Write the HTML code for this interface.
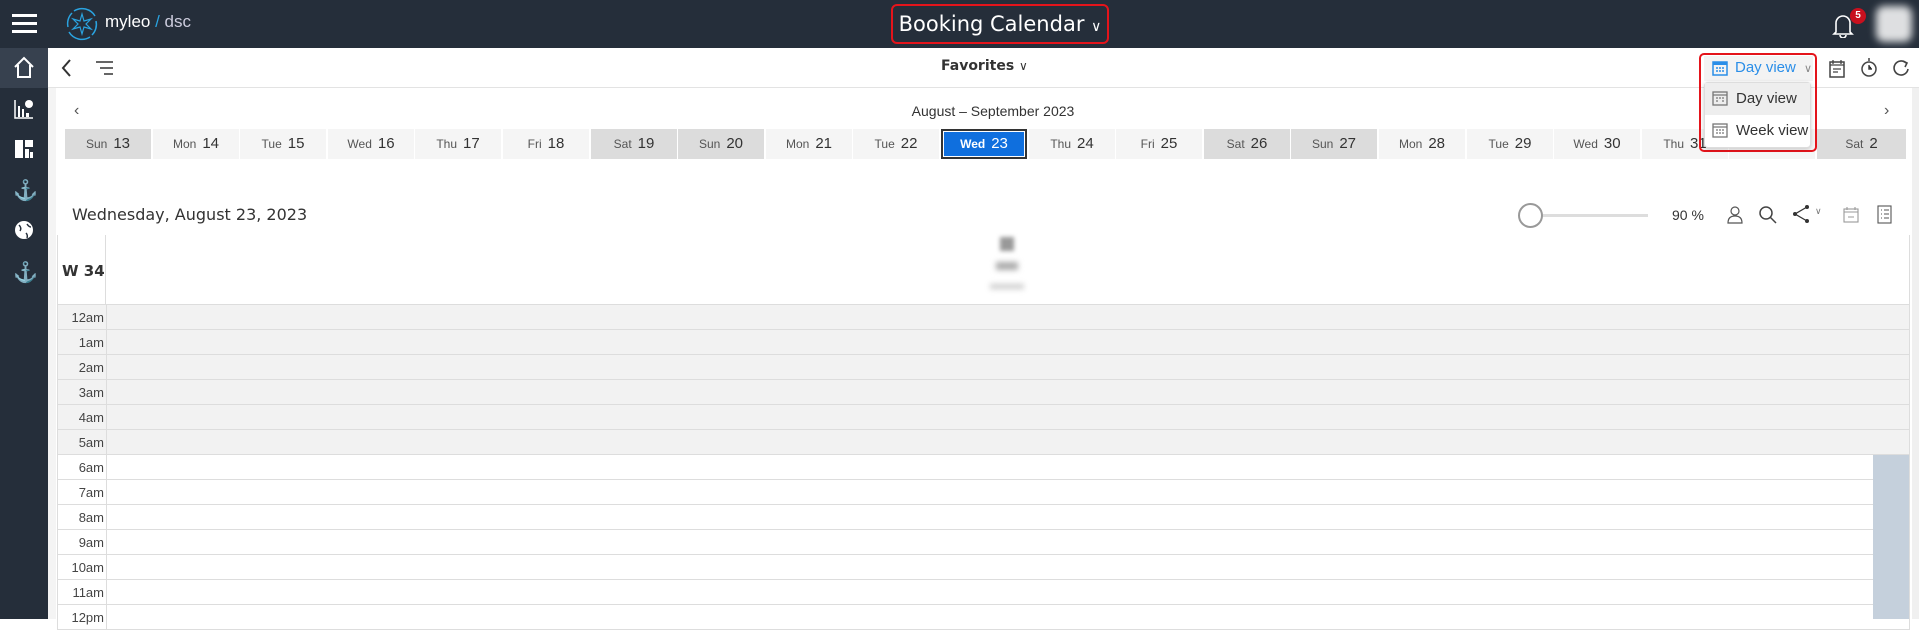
<!DOCTYPE html>
<html><head><meta charset="utf-8">
<style>
*{box-sizing:border-box;margin:0;padding:0}
body{width:1919px;height:619px;overflow:hidden;background:#fff;font-family:"Liberation Sans",sans-serif;position:relative;color:#333}
.abs{position:absolute}
#top{left:0;top:0;width:1919px;height:48px;background:#252e3a}
#side{left:0;top:48px;width:48px;height:571px;background:#252e3a}
.cell{position:absolute;top:129px;height:30px;width:86px;background:#f5f5f5;font-size:12px;color:#555;line-height:30px;text-align:center}
.cell b{font-weight:normal;font-size:15px;color:#333;margin-left:6px}
.we{background:#dcdcdc}
.row{position:absolute;left:57px;width:1853px;height:25px;border-bottom:1px solid #ddd;border-left:1px solid #ddd;border-right:1px solid #ddd}
.row span{position:absolute;left:0;width:46px;text-align:right;font-size:13px;color:#444;line-height:25px}
.row i{position:absolute;left:48px;top:0;bottom:-1px;border-left:1px solid #ddd}
.dd{z-index:5}
</style></head><body>
<div id="top" class="abs"></div>
<div class="abs" style="left:12px;top:14px;width:25px;height:3px;background:#fff"></div>
<div class="abs" style="left:12px;top:22px;width:25px;height:3px;background:#fff"></div>
<div class="abs" style="left:12px;top:30px;width:25px;height:3px;background:#fff"></div>
<svg class="abs" style="left:64px;top:6px" width="36" height="36" viewBox="0 0 36 36"><path d="M10 5 A15 15 0 0 1 31 10" fill="none" stroke="#2aa3e0" stroke-width="1.5"/><path d="M26 31 A15 15 0 0 1 5 26" fill="none" stroke="#2aa3e0" stroke-width="1.5"/><path d="M4 21 A15 15 0 0 1 8 7" fill="none" stroke="#2aa3e0" stroke-width="1.5"/><path d="M32 15 A15 15 0 0 1 28 29" fill="none" stroke="#2aa3e0" stroke-width="1.5"/><path d="M18 8 L20 15 L27 13 L22 18 L27 23 L20 21 L18 28 L16 21 L9 23 L14 18 L9 13 L16 15Z" fill="none" stroke="#2aa3e0" stroke-width="1.2"/></svg>
<div class="abs" style="left:105px;top:12px;font-size:17px;color:#fff">myleo<span style="color:#2aa3e0"> / </span><span style="color:#ccd">dsc</span></div>
<div class="abs" style="left:891px;top:4px;width:218px;height:40px;border:2px solid #e4141b;border-radius:6px;color:#fff;font-size:21px;line-height:36px;text-align:center;font-family:'DejaVu Sans','Liberation Sans',sans-serif">Booking Calendar <span style="font-size:14px">&#8744;</span></div>
<svg class="abs" style="left:1830px;top:12px" width="26" height="26" viewBox="0 0 26 26"><path d="M6 20 L6 11 A7 7 0 0 1 20 11 L20 20 L22 22 L4 22 Z M10 23 A3 3 0 0 0 16 23" fill="none" stroke="#fff" stroke-width="1.6"/></svg>
<div class="abs" style="left:1850px;top:8px;width:16px;height:16px;border-radius:50%;background:#c8101e;color:#fff;font-size:10px;text-align:center;line-height:16px;font-weight:bold">5</div>
<div class="abs" style="left:1876px;top:6px;width:36px;height:36px;background:#fff;filter:blur(4px);opacity:.85;border-radius:8px"></div>

<div id="side" class="abs"></div>
<div class="abs" style="left:0;top:48px;width:48px;height:40px;background:#37414f"></div>
<svg class="abs" style="left:13px;top:56px" width="22" height="24" viewBox="0 0 22 24"><path d="M2 11 L11 2 L20 11 M5 9 V21 H17 V9" fill="none" stroke="#fff" stroke-width="2"/></svg>
<svg class="abs" style="left:13px;top:98px" width="22" height="22" viewBox="0 0 22 22"><path d="M2 2 V20 H20" stroke="#fff" stroke-width="1.5" fill="none"/><rect x="5" y="8" width="2" height="11" fill="#fff"/><rect x="9" y="11" width="2" height="8" fill="#fff"/><rect x="13" y="15" width="3" height="4" fill="#fff"/><circle cx="16" cy="6" r="4" fill="#fff"/></svg>
<svg class="abs" style="left:14px;top:139px" width="20" height="20"><rect x="1" y="1" width="8" height="18" fill="#fff"/><rect x="11" y="1" width="8" height="7" fill="#fff"/><rect x="11" y="10" width="4" height="9" fill="#fff"/><rect x="16" y="13" width="3" height="6" fill="#fff"/></svg>
<div class="abs" style="left:13px;top:178px;color:#fff;font-size:20px">&#9875;</div>
<svg class="abs" style="left:14px;top:220px" width="20" height="20"><circle cx="10" cy="10" r="9" fill="#fff"/><path d="M5 5 Q8 8 6 11 M12 13 Q14 15 13 18 M13 4 Q15 7 17 7" stroke="#252e3a" stroke-width="1.5" fill="none"/></svg>
<div class="abs" style="left:13px;top:260px;color:#fff;font-size:20px">&#9875;</div>

<div class="abs" style="left:48px;top:87px;width:1871px;height:1px;background:#e3e3e3"></div>
<svg class="abs" style="left:60px;top:58px" width="14" height="20"><path d="M10 2 L3 10 L10 18" stroke="#333" stroke-width="2" fill="none"/></svg>
<svg class="abs" style="left:96px;top:60px" width="18" height="16"><path d="M0 2 H17 M4 8 H17 M8 14 H17" stroke="#333" stroke-width="1.5"/></svg>
<div class="abs" style="left:941px;top:58px;font-weight:bold;color:#333;font-family:'DejaVu Sans',sans-serif;font-size:14px">Favorites <span style="font-weight:normal;font-size:12px">&#8744;</span></div>
<svg class="abs" style="left:1828px;top:59px" width="18" height="20"><rect x="2" y="3" width="14" height="15" fill="none" stroke="#444" stroke-width="1.5"/><path d="M2 6h14M5 1v4M13 1v4M5 10h8M5 13h5" stroke="#444" stroke-width="1.3"/></svg>
<svg class="abs" style="left:1860px;top:57px" width="18" height="22"><circle cx="9" cy="12" r="7" fill="none" stroke="#444" stroke-width="1.5"/><path d="M9 8v4h3M9 1v3" stroke="#444" stroke-width="1.5"/></svg>
<svg class="abs" style="left:1891px;top:58px" width="20" height="20"><path d="M15 5 A7 7 0 1 0 17 11" fill="none" stroke="#444" stroke-width="1.6"/><path d="M12 3 L16 5 L14 9" fill="none" stroke="#444" stroke-width="1.6"/></svg>

<div class="abs" style="left:48px;top:88px;width:8px;height:531px;background:#f4f4f4"></div>
<div class="abs" style="left:1912px;top:88px;width:7px;height:531px;background:#f0f0f0"></div>
<div class="abs" style="left:74px;top:102px;font-size:16px;color:#555">&#8249;</div>
<div class="abs" style="left:1884px;top:102px;font-size:16px;color:#555">&#8250;</div>
<div class="abs" style="left:880px;width:226px;text-align:center;top:103px;font-size:14px;color:#333">August – September 2023</div>

<div class="cell we" style="left:65px">Sun<b>13</b></div>
<div class="cell" style="left:153px">Mon<b>14</b></div>
<div class="cell" style="left:240px">Tue<b>15</b></div>
<div class="cell" style="left:328px">Wed<b>16</b></div>
<div class="cell" style="left:415px">Thu<b>17</b></div>
<div class="cell" style="left:503px">Fri<b>18</b></div>
<div class="cell we" style="left:591px">Sat<b>19</b></div>
<div class="cell we" style="left:678px">Sun<b>20</b></div>
<div class="cell" style="left:766px">Mon<b>21</b></div>
<div class="cell" style="left:853px">Tue<b>22</b></div>
<div class="cell" style="left:941px;background:#0f6fde;border:2px solid #333;box-shadow:inset 0 0 0 1px #fff;color:#fff;font-weight:bold;line-height:26px">Wed<b style="color:#fff">23</b></div>
<div class="cell" style="left:1029px">Thu<b>24</b></div>
<div class="cell" style="left:1116px">Fri<b>25</b></div>
<div class="cell we" style="left:1204px">Sat<b>26</b></div>
<div class="cell we" style="left:1291px">Sun<b>27</b></div>
<div class="cell" style="left:1379px">Mon<b>28</b></div>
<div class="cell" style="left:1467px">Tue<b>29</b></div>
<div class="cell" style="left:1554px">Wed<b>30</b></div>
<div class="cell" style="left:1642px">Thu<b>31</b></div>
<div class="cell" style="left:1729px">Fri<b>1</b></div>
<div class="cell we" style="left:1817px;width:89px">Sat<b>2</b></div>

<!-- dropdown on top -->
<div class="abs dd" style="left:1699px;top:53px;width:118px;height:99px;border:2px solid #e4141b;border-radius:5px"></div>
<div class="abs dd" style="left:1704px;top:56px;width:109px;height:25px;background:#f3f3f3"></div>
<svg class="abs dd" style="left:1712px;top:60px" width="16" height="16"><rect x="1" y="2" width="14" height="13" fill="none" stroke="#2a8ee8" stroke-width="1.5"/><rect x="1" y="2" width="14" height="3" fill="#2a8ee8"/><path d="M4 8h2M7 8h2M10 8h2M4 11h2M7 11h2M10 11h2" stroke="#2a8ee8" stroke-width="1.5"/></svg>
<div class="abs dd" style="left:1735px;top:59px;font-size:15px;color:#2a8ee8">Day view <span style="font-size:11px;color:#888;margin-left:4px">&#8744;</span></div>
<div class="abs dd" style="left:1704px;top:82px;width:107px;height:66px;background:#fff;border:1px solid #ddd;border-radius:4px;box-shadow:0 1px 4px rgba(0,0,0,.2)"></div>
<div class="abs dd" style="left:1705px;top:83px;width:105px;height:32px;background:#eee"></div>
<svg class="abs dd" style="left:1712px;top:90px" width="16" height="16"><rect x="1" y="2" width="14" height="13" fill="none" stroke="#777" stroke-width="1.3"/><path d="M1 5h14M4 8h2M7 8h2M10 8h2M4 11h2M10 11h2" stroke="#777" stroke-width="1.3"/></svg>
<div class="abs dd" style="left:1736px;top:90px;font-size:15px;color:#333">Day view</div>
<svg class="abs dd" style="left:1712px;top:122px" width="16" height="16"><rect x="1" y="2" width="14" height="13" fill="none" stroke="#777" stroke-width="1.3"/><path d="M1 5h14M4 8h2M7 8h2M10 8h2M4 11h2M7 11h2M10 11h2" stroke="#777" stroke-width="1.3"/></svg>
<div class="abs dd" style="left:1736px;top:122px;font-size:15px;color:#333">Week view</div>

<div class="abs" style="left:72px;top:205px;font-size:16px;color:#333;font-family:'DejaVu Sans',sans-serif">Wednesday, August 23, 2023</div>
<div class="abs" style="left:1530px;top:214px;width:118px;height:3px;background:#ddd"></div>
<div class="abs" style="left:1518px;top:203px;width:25px;height:25px;border:2px solid #999;border-radius:50%;background:#fff"></div>
<div class="abs" style="left:1672px;top:207px;font-size:14px;color:#333">90 %</div>
<svg class="abs" style="left:1725px;top:205px" width="20" height="20"><circle cx="10" cy="6" r="4" fill="none" stroke="#555" stroke-width="1.2"/><path d="M3 18 Q3 11 10 11 Q17 11 17 18 Z" fill="none" stroke="#555" stroke-width="1.2"/></svg>
<svg class="abs" style="left:1758px;top:205px" width="20" height="20"><circle cx="8" cy="8" r="6" fill="none" stroke="#444" stroke-width="1.5"/><path d="M12.5 12.5 L18 18" stroke="#444" stroke-width="1.5"/></svg>
<svg class="abs" style="left:1791px;top:204px" width="20" height="20"><path d="M16 3 L4 10 L16 17" fill="none" stroke="#333" stroke-width="1.3"/><circle cx="16" cy="3" r="2" fill="#333"/><circle cx="4" cy="10" r="2" fill="#333"/><circle cx="16" cy="17" r="2" fill="#333"/></svg>
<div class="abs" style="left:1815px;top:206px;font-size:9px;color:#777">&#8744;</div>
<svg class="abs" style="left:1843px;top:206px" width="17" height="18"><rect x="1" y="3" width="14" height="13" fill="none" stroke="#999" stroke-width="1.1"/><path d="M1 6h14M4 1v3M12 1v3M5 11h6" stroke="#999" stroke-width="1.1"/></svg>
<svg class="abs" style="left:1877px;top:205px" width="16" height="20"><rect x="1" y="1" width="13" height="17" fill="none" stroke="#555" stroke-width="1.1"/><path d="M4 5h1M7 5h5M4 9h1M7 9h5M4 13h1M7 13h5" stroke="#555" stroke-width="1.1"/></svg>

<div class="abs" style="left:57px;top:235px;width:1853px;height:70px;border-left:1px solid #ddd;border-right:1px solid #ddd;border-bottom:1px solid #ddd"></div>
<div class="abs" style="left:105px;top:235px;width:1px;height:70px;background:#ddd"></div>
<div class="abs" style="left:62px;top:262px;font-size:15px;font-weight:bold;color:#333;font-family:'DejaVu Sans',sans-serif">W 34</div>
<div class="abs" style="left:1000px;top:237px;width:14px;height:14px;background:#999;filter:blur(2px)"></div>
<div class="abs" style="left:996px;top:262px;width:22px;height:8px;background:#aaa;filter:blur(3px)"></div>
<div class="abs" style="left:990px;top:284px;width:34px;height:5px;background:#ccc;filter:blur(3px)"></div>

<div class="row" style="top:305px;background:#f2f2f2"><span>12am</span><i></i></div>
<div class="row" style="top:330px;background:#f2f2f2"><span>1am</span><i></i></div>
<div class="row" style="top:355px;background:#f2f2f2"><span>2am</span><i></i></div>
<div class="row" style="top:380px;background:#f2f2f2"><span>3am</span><i></i></div>
<div class="row" style="top:405px;background:#f2f2f2"><span>4am</span><i></i></div>
<div class="row" style="top:430px;background:#f2f2f2"><span>5am</span><i></i></div>
<div class="row" style="top:455px"><span>6am</span><i></i></div>
<div class="row" style="top:480px"><span>7am</span><i></i></div>
<div class="row" style="top:505px"><span>8am</span><i></i></div>
<div class="row" style="top:530px"><span>9am</span><i></i></div>
<div class="row" style="top:555px"><span>10am</span><i></i></div>
<div class="row" style="top:580px"><span>11am</span><i></i></div>
<div class="row" style="top:605px"><span>12pm</span><i></i></div>
<div class="abs" style="left:1873px;top:455px;width:36px;height:164px;background:#c5d0dc"></div>
</body></html>
